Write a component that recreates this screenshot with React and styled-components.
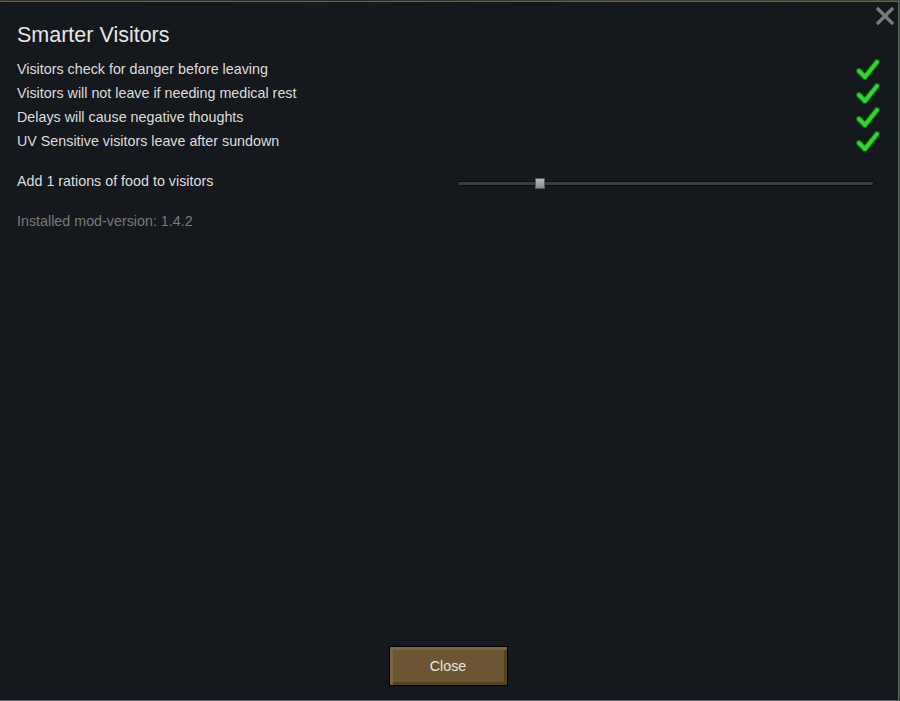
import React from "react";
import styled, { createGlobalStyle } from "styled-components";

const Global = createGlobalStyle`
  html, body { margin: 0; padding: 0; background: #15181d; }
  body { font-family: "Liberation Sans", Arial, sans-serif; }
  * { box-sizing: border-box; }
`;

const Screen = styled.div`
  width: 900px;
  height: 701px;
  background: linear-gradient(90deg, #3b3226 0%, #2d2a22 40%, #4a4330 70%, #3b4a2a 100%);
  padding: 1px 1px 0 0;
  display: flex;
`;

const Window = styled.div`
  position: relative;
  flex: 1;
  background: #15181d;
  border-top: 1px solid #5d636b;
  border-right: 1px solid #5d636b;
  border-bottom: 1px solid #5d636b;
  padding: 19px 17px 14px 17px;
  display: flex;
  flex-direction: column;
  color: #dedede;
`;

const CloseX = styled.button`
  position: absolute;
  top: 3px;
  right: 2px;
  width: 22px;
  height: 22px;
  padding: 0;
  border: none;
  background: none;
  cursor: pointer;
  display: flex;
  align-items: center;
  justify-content: center;
`;

const Title = styled.h1`
  margin: 0;
  font-size: 21.5px;
  font-weight: normal;
  line-height: 28px;
  color: #e6e6e6;
`;

const List = styled.div`
  margin-top: 8px;
  display: flex;
  flex-direction: column;
`;

const Row = styled.div`
  height: 24px;
  display: flex;
  align-items: center;
  justify-content: space-between;
  font-size: 14.3px;
  padding-right: 1px;
`;

const SliderRow = styled.div`
  margin-top: 16px;
  height: 24px;
  display: flex;
  align-items: center;
  justify-content: space-between;
  font-size: 14.3px;
`;

const Track = styled.div`
  position: relative;
  width: 417px;
  height: 5px;
  margin-right: 7px;
  margin-top: 4px;
  border-radius: 2px;
  background: #3a3c40;
  border: 1px solid #0b0c0e;
`;

const Thumb = styled.div`
  position: absolute;
  top: -4px;
  width: 10px;
  height: 11px;
  background: linear-gradient(#b8b8b8, #8a8a8a);
  border: 1px solid #5a5a5a;
`;

const Version = styled.div`
  margin-top: 16px;
  font-size: 14.3px;
  line-height: 24px;
  color: #7a7a7a;
`;

const Spacer = styled.div`
  flex: 1;
`;

const Footer = styled.div`
  display: flex;
  justify-content: center;
  padding-right: 2px;
`;

const Button = styled.button`
  width: 119px;
  height: 40px;
  font-family: "Liberation Sans", Arial, sans-serif;
  font-size: 14.3px;
  color: #e8e8e8;
  background: #6b5532;
  border: 1px solid #000;
  box-shadow: inset 3px 3px 0 #7a6441, inset -3px -3px 0 #55431f;
  cursor: pointer;
  padding: 0;
`;

const Check = () => (
  <svg width="24" height="22" viewBox="0 0 24 22">
    <polyline points="3,13 9,19 21,4" fill="none" stroke="#0c5a0c" strokeWidth="6.5" strokeLinecap="round" strokeLinejoin="round" />
    <polyline points="3,13 9,19 21,4" fill="none" stroke="#2fd62f" strokeWidth="4" strokeLinecap="round" strokeLinejoin="round" />
  </svg>
);

const XIcon = () => (
  <svg width="20" height="20" viewBox="0 0 20 20">
    <path d="M2 2 L18 18 M18 2 L2 18" stroke="#7a7a7a" strokeWidth="3.4" />
  </svg>
);

const options = [
  "Visitors check for danger before leaving",
  "Visitors will not leave if needing medical rest",
  "Delays will cause negative thoughts",
  "UV Sensitive visitors leave after sundown",
];

export default function App() {
  const value = 1;
  const max = 5;
  const pct = (value / max) * 100;
  return (
    <>
      <Global />
      <Screen>
        <Window>
          <CloseX aria-label="Close"><XIcon /></CloseX>
          <Title>Smarter Visitors</Title>
          <List>
            {options.map((o) => (
              <Row key={o}>
                <span>{o}</span>
                <Check />
              </Row>
            ))}
          </List>
          <SliderRow>
            <span>Add 1 rations of food to visitors</span>
            <Track>
              <Thumb style={{ left: `calc(${pct}% - 6px)` }} />
            </Track>
          </SliderRow>
          <Version>Installed mod-version: 1.4.2</Version>
          <Spacer />
          <Footer>
            <Button>Close</Button>
          </Footer>
        </Window>
      </Screen>
    </>
  );
}
